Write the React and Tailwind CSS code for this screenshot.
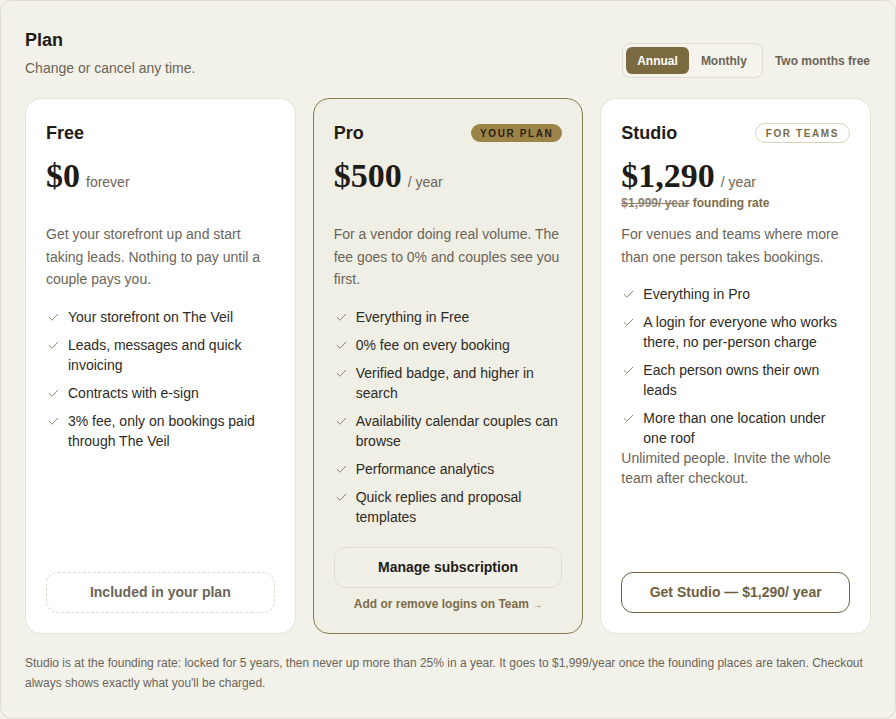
import { Check } from 'lucide-react';

const sans = { fontFamily: "'Liberation Sans', Arial, sans-serif" };
const serif = { fontFamily: "'Liberation Serif', 'Times New Roman', serif", fontVariantNumeric: 'oldstyle-nums' };

function Feature({ children }) {
  return (
    <li className="flex items-start gap-2 text-[14px] leading-5 text-[#2d2a24]">
      <Check className="w-[13px] h-[13px] mt-[4px] ml-px shrink-0 text-[#7a7058]" strokeWidth={1.6} />
      <span>{children}</span>
    </li>
  );
}

function Price({ amount, unit }) {
  return (
    <div className="flex items-baseline gap-1.5 mt-3">
      <span className="text-[34px] leading-[34px] font-bold text-[#1f1b16]" style={serif}>{amount}</span>
      <span className="text-[14px] text-[#6b6457]">{unit}</span>
    </div>
  );
}

export default function App() {
  return (
    <div className="min-h-screen bg-[#f3f2ea]" style={sans}>
      <div className="border border-[#dedbd0] rounded-xl bg-[#f2f2ea] p-6 pb-[25px]">
        {/* Header */}
        <div className="flex items-end justify-between mb-5">
          <div className="pt-px">
            <h1 className="text-[18px] leading-7 font-bold text-[#1f1b16]">Plan</h1>
            <p className="mt-1 text-[14px] leading-5 text-[#6b6457]">Change or cancel any time.</p>
          </div>
          <div className="flex items-center gap-3">
            <div className="flex items-center p-[3px] border border-[#e0ddd1] rounded-lg bg-[#f4f3ec]">
              <button className="px-[11px] h-[27px] rounded-md bg-[#7b6a3f] text-white text-[12px] font-bold">Annual</button>
              <button className="px-3 h-[27px] rounded-md text-[#6b6457] text-[12px] font-bold">Monthly</button>
            </div>
            <span className="text-[12px] font-bold text-[#6b6457] pr-px">Two months free</span>
          </div>
        </div>

        {/* Cards */}
        <div className="grid grid-cols-3 gap-[17px]">
          {/* Free */}
          <div className="flex flex-col bg-white border border-[#e6e3d8] rounded-2xl p-5">
            <div className="flex items-center justify-between h-7">
              <h2 className="text-[18px] font-bold text-[#1f1b16]">Free</h2>
            </div>
            <Price amount="$0" unit="forever" />
            <div className="h-4 mt-[2px]" />
            <p className="mt-3 text-[14px] leading-[22.5px] text-[#6b6457]">
              Get your storefront up and start taking leads. Nothing to pay until a couple pays you.
            </p>
            <ul className="mt-4 space-y-2">
              <Feature>Your storefront on The Veil</Feature>
              <Feature>Leads, messages and quick invoicing</Feature>
              <Feature>Contracts with e-sign</Feature>
              <Feature>3% fee, only on bookings paid through The Veil</Feature>
            </ul>
            <div className="mt-auto pt-5">
              <div className="h-[41px] flex items-center justify-center border border-dashed border-[#dcd9cf] rounded-xl text-[14px] font-bold text-[#6b6457]">
                Included in your plan
              </div>
            </div>
          </div>

          {/* Pro */}
          <div className="flex flex-col bg-[#f0efe6] border border-[#8c7c52] rounded-2xl p-5">
            <div className="flex items-center justify-between h-7">
              <h2 className="text-[18px] font-bold text-[#1f1b16]">Pro</h2>
              <span className="h-[18px] px-[9px] flex items-center rounded-full bg-[#9c8449] text-[10px] font-bold tracking-[0.16em] text-[#2a2212]">YOUR PLAN</span>
            </div>
            <Price amount="$500" unit="/ year" />
            <div className="h-4 mt-[2px]" />
            <p className="mt-3 text-[14px] leading-[22.5px] text-[#6b6457]">
              For a vendor doing real volume. The fee goes to 0% and couples see you first.
            </p>
            <ul className="mt-4 space-y-2">
              <Feature>Everything in Free</Feature>
              <Feature>0% fee on every booking</Feature>
              <Feature>Verified badge, and higher in search</Feature>
              <Feature>Availability calendar couples can browse</Feature>
              <Feature>Performance analytics</Feature>
              <Feature>Quick replies and proposal templates</Feature>
            </ul>
            <div className="mt-auto pt-5">
              <button className="w-full h-[41px] flex items-center justify-center border border-[#e0ddd2] rounded-xl bg-[#f1f0e8] text-[14px] font-bold text-[#1f1b16]">
                Manage subscription
              </button>
              <div className="mt-2 text-center text-[12px] leading-4 font-bold text-[#7d6c48]">
                Add or remove logins on Team <span className="text-[10px]">→</span>
              </div>
            </div>
          </div>

          {/* Studio */}
          <div className="flex flex-col bg-white border border-[#e6e3d8] rounded-2xl p-5">
            <div className="flex items-center justify-between h-7">
              <h2 className="text-[18px] font-bold text-[#1f1b16]">Studio</h2>
              <span className="h-[20px] px-[10px] flex items-center rounded-full border border-[#d8d0bb] text-[10px] font-bold tracking-[0.16em] text-[#7a6a48]">FOR TEAMS</span>
            </div>
            <Price amount="$1,290" unit="/ year" />
            <div className="h-4 mt-[2px] text-[12px] leading-4 font-bold">
              <span className="line-through text-[#8a8070]">$1,999/ year</span>{' '}
              <span className="text-[#7d6c48]">founding rate</span>
            </div>
            <p className="mt-3 text-[14px] leading-[22.5px] text-[#6b6457]">
              For venues and teams where more than one person takes bookings.
            </p>
            <ul className="mt-4 space-y-2">
              <Feature>Everything in Pro</Feature>
              <Feature>A login for everyone who works there, no per-person charge</Feature>
              <Feature>Each person owns their own leads</Feature>
              <Feature>More than one location under one roof</Feature>
            </ul>
            <p className="text-[14px] leading-5 text-[#6b6457]">
              Unlimited people. Invite the whole team after checkout.
            </p>
            <div className="mt-auto pt-5">
              <button className="w-full h-[41px] flex items-center justify-center border border-[#6e6040] rounded-xl bg-white text-[14px] font-bold text-[#6e5f3e]">
                Get Studio — $1,290/ year
              </button>
            </div>
          </div>
        </div>

        <p className="mt-[19px] text-[12px] leading-5 text-[#6b6457]">
          Studio is at the founding rate: locked for 5 years, then never up more than 25% in a year. It goes to $1,999/year once the founding places are taken. Checkout always shows exactly what you'll be charged.
        </p>
      </div>
    </div>
  );
}
